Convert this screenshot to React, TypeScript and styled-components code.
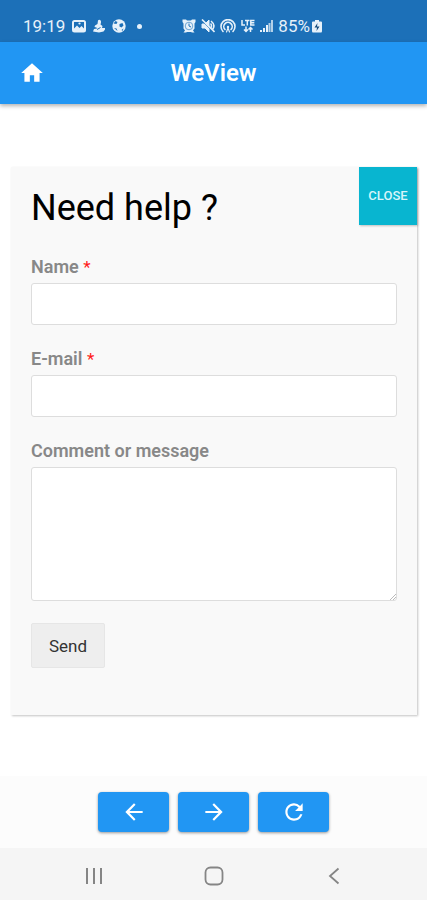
import React from "react";
import styled, { createGlobalStyle } from "styled-components";
import { MdArrowBack, MdArrowForward, MdHome, MdRefresh } from "react-icons/md";

const GlobalStyle = createGlobalStyle`
  *, *::before, *::after { box-sizing: border-box; }
  body { margin: 0; background: #fff; font-family: Roboto, "Liberation Sans", sans-serif; }
  button, input, textarea { font: inherit; margin: 0; }
`;

const Screen = styled.div`
  min-height: 100vh;
  display: flex;
  flex-direction: column;
  background: #fff;
`;

const StatusBar = styled.div`
  height: 42px;
  padding: 10px 23px 0;
  display: flex;
  align-items: center;
  gap: 40px;
  background: #1c70b8;
  color: #e6f1fa;
  font-size: 17px;
  line-height: 20px;
`;

const StatusGroup = styled.div<{ $gap: number }>`
  display: flex;
  align-items: center;
  gap: ${(p) => p.$gap}px;
  svg { display: block; flex: none; }
`;

const Battery = styled.div`
  display: flex;
  align-items: center;
  gap: 2px;
`;

const AppBar = styled.header`
  height: 62px;
  padding: 0 16px;
  display: grid;
  grid-template-columns: 32px 1fr 32px;
  align-items: center;
  background: #2196f3;
  color: #fff;
  box-shadow: 0 2px 4px rgba(0, 0, 0, 0.3);
  z-index: 1;
`;

const HomeButton = styled.button`
  width: 32px;
  height: 32px;
  padding: 0;
  display: grid;
  place-items: center;
  border: 0;
  background: none;
  color: inherit;
`;

const AppTitle = styled.h1`
  margin: 0;
  text-align: center;
  font-size: 24px;
  line-height: 28px;
  font-weight: 600;
`;

const Content = styled.main`
  flex: 1;
  padding: 63px 10px 61px 11px;
  display: flex;
  flex-direction: column;
`;

const Card = styled.section`
  position: relative;
  flex: 1;
  padding: 17px 20px 45px;
  background: #f9f9f9;
  box-shadow: 1px 1px 2px rgba(0, 0, 0, 0.24);
`;

const CloseButton = styled.button`
  position: absolute;
  top: 0;
  right: 0;
  width: 58px;
  height: 58px;
  padding: 0;
  border: 0;
  background: #08b5d0;
  color: #d6f5fa;
  font-size: 13px;
  line-height: 16px;
  font-weight: 500;
  box-shadow: 1px 1px 2px rgba(0, 0, 0, 0.24);
`;

const Heading = styled.h2`
  margin: 0 0 23px;
  font-size: 36px;
  line-height: 48px;
  font-weight: 400;
  color: #000;
`;

const Form = styled.form`
  display: flex;
  flex-direction: column;
  align-items: flex-start;
  gap: 22px;
`;

const Field = styled.div`
  width: 100%;
  display: flex;
  flex-direction: column;
  gap: 4px;
`;

const Label = styled.label`
  font-size: 18px;
  line-height: 24px;
  font-weight: 600;
  color: #888;
`;

const Required = styled.span`
  color: #ff1a1a;
  font-size: 17px;
  font-weight: 400;
`;

const TextInput = styled.input`
  width: 100%;
  height: 42px;
  padding: 8px 12px;
  border: 1px solid #ddd;
  border-radius: 3px;
  background: #fff;
  font-size: 17px;
`;

const TextArea = styled.textarea`
  display: block;
  width: 100%;
  height: 134px;
  padding: 8px 12px;
  border: 1px solid #ddd;
  border-radius: 3px;
  background: #fff;
  font-size: 17px;
  resize: none;
`;

const SendButton = styled.button`
  height: 45px;
  padding: 0 17px;
  border: 1px solid #e6e6e6;
  border-radius: 2px;
  background: #eee;
  color: #333;
  font-size: 17px;
  line-height: 24px;
`;

const Toolbar = styled.nav`
  height: 72px;
  display: flex;
  align-items: center;
  justify-content: center;
  gap: 9px;
  background: #fcfcfc;
`;

const ToolButton = styled.button`
  width: 71px;
  height: 40px;
  padding: 0;
  display: grid;
  place-items: center;
  border: 0;
  border-radius: 4px;
  background: #2196f3;
  color: #fff;
  box-shadow: 0 1px 3px rgba(0, 0, 0, 0.4);
`;

const SystemNav = styled.nav`
  height: 52px;
  padding-top: 3px;
  display: flex;
  align-items: center;
  justify-content: center;
  gap: 88px;
  background: #f5f5f5;
`;

const SystemButton = styled.button`
  width: 32px;
  height: 32px;
  padding: 0;
  display: grid;
  place-items: center;
  border: 0;
  background: none;
  color: #858585;
`;

const PictureIcon = () => (
  <svg width="14" height="14" viewBox="0 0 14 14" aria-hidden="true">
    <rect x="0" y="1" width="14" height="12.500" rx="2.500" fill="currentColor" />
    <path d="M2 3h10v6.500L9.500 7 7.500 9 5 6.500 2 9.500z" fill="#1c70b8" />
    <circle cx="7.500" cy="4.500" r="1.100" fill="currentColor" />
  </svg>
);

const FigureIcon = () => (
  <svg width="12" height="14" viewBox="0 0 12 14" fill="currentColor" aria-hidden="true">
    <path d="M5 1.500C6 0 8.500 1 8 3.500L7.500 5.500 9.500 7 9 9H12V10.500L10.500 12.500 6 13.500 0 12.500 1 10 4 9.500 3.500 8.500 1.500 8 2 6.500 4.500 5z" />
    <path d="m4 10.500 3.500-2" stroke="#1c70b8" />
  </svg>
);

const BallIcon = () => (
  <svg width="14" height="14" viewBox="0 0 14 14" aria-hidden="true">
    <circle cx="7" cy="7" r="6.700" fill="currentColor" />
    <path d="M7.500 5 10.500 4 11.500 6.500 9.500 8.500 7.500 7.500z" fill="#1c70b8" />
    <path d="M1.500 4.500 3.500 2 5.500 3 4.500 5zM2 9l2.500.5 1 2.500zM9.500 11l2-1.500L10.500 12z" fill="#1c70b8" />
  </svg>
);

const DotIcon = () => (
  <svg width="5" height="5" viewBox="0 0 5 5" aria-hidden="true">
    <circle cx="2.500" cy="2.500" r="2.500" fill="currentColor" />
  </svg>
);

const AlarmIcon = () => (
  <svg width="14" height="14" viewBox="0 0 14 14" aria-hidden="true">
    <path d="M.5 3V.5H4L5 1.500H9L10 .5h3.500V3l-1 1.500v5L11 11.500 12.500 13.500H10L9 13H5l-1 .5H1.500L3 11.500 1.500 9.500v-5z" fill="currentColor" />
    <circle cx="7" cy="7" r="3.800" fill="none" stroke="#1c70b8" strokeWidth=".6" />
    <path d="M7 4.500V7l2 1" stroke="#1c70b8" fill="none" />
  </svg>
);

const MuteIcon = () => (
  <svg width="14" height="14" viewBox="0 0 14 14" fill="none" stroke="currentColor" aria-hidden="true">
    <path d="M1 5h3l4-4v12L4 9H1z" fill="currentColor" />
    <path d="m.5 1.500 12 12" stroke="#1c70b8" strokeWidth=".7" />
    <path d="m1 .5 12.500 12.500" strokeWidth="1.600" />
    <path d="M9.500 4.500q2 2 0 5M10 2q5 4 1.500 8.500" strokeWidth="1.600" />
  </svg>
);

const HotspotIcon = () => (
  <svg width="16" height="14" viewBox="0 0 16 14" fill="none" stroke="currentColor" strokeWidth="1.600" strokeLinecap="round" aria-hidden="true">
    <path d="M3 12.500A7 7 0 1 1 13 12.500M5 10.500a4.200 4.200 0 1 1 6 0" />
    <circle cx="8" cy="8" r="1.200" fill="currentColor" stroke="none" />
    <path d="M6.500 13 8 9l1.500 4" strokeWidth="1.200" />
  </svg>
);

const LteIcon = () => (
  <svg width="14" height="14" viewBox="0 0 14 14" fill="none" stroke="currentColor" strokeWidth="1.500" aria-hidden="true">
    <path d="M1 1v5h3M4 1.500h4.500M6.300 1.500V6.500M13.500 1.500H9.800V6h3.700M9.800 3.700h3.500" />
    <path d="M5 7.500V13M3 10.500l2 2 2-2M9.500 13V8M7.500 10.500l2-2L11.500 10.500" />
  </svg>
);

const SignalIcon = () => (
  <svg width="13" height="14" viewBox="0 0 13 14" fill="currentColor" aria-hidden="true">
    <path d="M0 11h2v2H0zM3 9h2v4H3zM6 6h2v7H6z" />
    <path d="M8.500 4h2v9h-2zM11 1h2v12h-2z" opacity=".75" />
  </svg>
);

const BatteryIcon = () => (
  <svg width="10" height="14" viewBox="0 0 10 14" aria-hidden="true">
    <path d="M3 1h4v1.500h2q1 0 1 1V12q0 1.500-1 1.500H1q-1 0-1-1.500V3.500q0-1 1-1h2z" fill="currentColor" />
    <path d="M5.500 4 2.500 8.500H5L4.500 12l3-4.500H5z" fill="#124a7c" />
  </svg>
);

const RecentsIcon = () => (
  <svg width="18" height="18" viewBox="0 0 18 18" stroke="currentColor" strokeWidth="2" aria-hidden="true">
    <path d="M2 1v16M9 1v16M16 1v16" />
  </svg>
);

const SystemHomeIcon = () => (
  <svg width="20" height="20" viewBox="0 0 20 20" fill="none" stroke="currentColor" strokeWidth="1.800" aria-hidden="true">
    <rect x="1.500" y="1.500" width="17" height="17" rx="5" />
  </svg>
);

const SystemBackIcon = () => (
  <svg width="12" height="18" viewBox="0 0 12 18" fill="none" stroke="currentColor" strokeWidth="1.800" aria-hidden="true">
    <path d="M10.500 1.500 2 9l8.500 7.500" />
  </svg>
);

const TextAreaFrame = styled.div`
  position: relative;
`;

const Grip = styled.svg`
  position: absolute;
  right: 1px;
  bottom: 1px;
  pointer-events: none;
`;

export default function App() {
  return (
    <Screen>
      <GlobalStyle />
      <StatusBar>
        <StatusGroup $gap={7}>
          <span>19:19</span>
          <PictureIcon />
          <FigureIcon />
          <BallIcon />
          <StatusGroup $gap={0}>
            <svg width="4" height="5" aria-hidden="true" />
            <DotIcon />
          </StatusGroup>
        </StatusGroup>
        <StatusGroup $gap={5}>
          <AlarmIcon />
          <MuteIcon />
          <HotspotIcon />
          <LteIcon />
          <SignalIcon />
          <Battery>
            <span>85%</span>
            <BatteryIcon />
          </Battery>
        </StatusGroup>
      </StatusBar>
      <AppBar>
        <HomeButton type="button" aria-label="Home">
          <MdHome size={26} />
        </HomeButton>
        <AppTitle>WeView</AppTitle>
      </AppBar>
      <Content>
        <Card>
          <Heading>Need help ?</Heading>
          <CloseButton type="button">CLOSE</CloseButton>
          <Form onSubmit={(e) => e.preventDefault()}>
            <Field>
              <Label htmlFor="name">
                Name <Required>*</Required>
              </Label>
              <TextInput id="name" type="text" required />
            </Field>
            <Field>
              <Label htmlFor="email">
                E-mail <Required>*</Required>
              </Label>
              <TextInput id="email" type="email" required />
            </Field>
            <Field>
              <Label htmlFor="message">Comment or message</Label>
              <TextAreaFrame>
                <TextArea id="message" />
                <Grip width="6" height="6" viewBox="0 0 6 6" stroke="#bbb" aria-hidden="true">
                  <path d="M0 6 6 0M3 6l3-3" />
                </Grip>
              </TextAreaFrame>
            </Field>
            <SendButton type="submit">Send</SendButton>
          </Form>
        </Card>
      </Content>
      <Toolbar aria-label="Page controls">
        <ToolButton type="button" aria-label="Back">
          <MdArrowBack size={26} />
        </ToolButton>
        <ToolButton type="button" aria-label="Forward">
          <MdArrowForward size={26} />
        </ToolButton>
        <ToolButton type="button" aria-label="Reload">
          <MdRefresh size={26} />
        </ToolButton>
      </Toolbar>
      <SystemNav aria-label="System">
        <SystemButton type="button" aria-label="Recent apps">
          <RecentsIcon />
        </SystemButton>
        <SystemButton type="button" aria-label="Home screen">
          <SystemHomeIcon />
        </SystemButton>
        <SystemButton type="button" aria-label="System back">
          <SystemBackIcon />
        </SystemButton>
      </SystemNav>
    </Screen>
  );
}
